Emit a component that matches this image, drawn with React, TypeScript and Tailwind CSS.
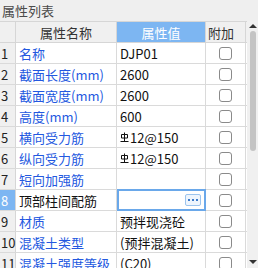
const rows = [
  { name: "名称", value: "DJP01" },
  { name: "截面长度(mm)", value: "2600" },
  { name: "截面宽度(mm)", value: "2600" },
  { name: "高度(mm)", value: "600" },
  { name: "横向受力筋", value: "12@150", bar: true },
  { name: "纵向受力筋", value: "12@150", bar: true },
  { name: "短向加强筋", value: "" },
  { name: "顶部柱间配筋", value: "", active: true },
  { name: "材质", value: "预拌现浇砼" },
  { name: "混凝土类型", value: "(预拌混凝土)" },
  { name: "混凝土强度等级", value: "(C20)" },
];

function RebarMark() {
  return (
    <svg width="9" height="11" viewBox="0 0 9 11" className="mr-[1px] shrink-0">
      <path d="M1.5 2.5 h6 v3.5 h-6 z" fill="none" stroke="#111" strokeWidth="1" />
      <path d="M4.5 0.5 v9" stroke="#111" strokeWidth="1" />
      <path d="M0.5 9.5 h8" stroke="#111" strokeWidth="1" />
    </svg>
  );
}

function Check() {
  return <div className="w-[13px] h-[13px] rounded-[3px] border border-[#8a8a8a] bg-white" />;
}

export default function App() {
  return (
    <div
      className="w-[258px] h-[268px] overflow-hidden bg-white flex flex-col text-[13px] leading-none"
      style={{ fontFamily: '"Noto Sans CJK SC", "Noto Sans", sans-serif' }}
    >
      {/* title */}
      <div className="h-[21px] shrink-0 bg-[#efefef] flex items-center pl-[2px] text-[#4a4a4a]">属性列表</div>

      <div className="flex flex-1 min-h-0">
        <div className="w-[247px] flex flex-col">
          {/* header */}
          <div className="flex h-[22px] shrink-0 bg-[#f0f0f0] border-t border-b border-[#d6d6d6]">
            <div className="w-[16px] border-r border-[#d6d6d6]" />
            <div className="w-[101px] border-r border-[#d6d6d6] flex items-center justify-center text-[#333]">属性名称</div>
            <div className="w-[89px] bg-[#7db6f2] border-r border-[#d6d6d6] flex items-center justify-center text-white">属性值</div>
            <div className="w-[40px] border-r border-[#d6d6d6] flex items-center pl-[2px] text-[#333]">附加</div>
          </div>

          {rows.map((r, i) => (
            <div key={i} className="flex h-[21px] shrink-0 border-b border-[#dadada]">
              <div
                className={
                  "w-[16px] border-r border-[#d6d6d6] flex items-center pl-[1px] " +
                  (r.active ? "bg-[#7db6f2] text-white" : "bg-[#f0f0f0] text-[#222]")
                }
              >
                {i + 1}
              </div>
              <div
                className={
                  "w-[101px] border-r border-[#dadada] flex items-center pl-[3px] whitespace-nowrap " +
                  (r.active ? "text-[#111]" : "text-[#2358e0]")
                }
              >
                {r.name}
              </div>
              {r.active ? (
                <div className="w-[89px] border-2 border-[#6aa8ea] flex items-center justify-end pr-[3px] -mt-[1px] h-[22px]">
                  <div className="w-[16px] h-[12px] rounded-[2px] border border-[#9cc4ee] bg-[#eef5fd] flex items-center justify-center gap-[2px]">
                    <div className="w-[2px] h-[2px] bg-[#3b79c9]" />
                    <div className="w-[2px] h-[2px] bg-[#3b79c9]" />
                    <div className="w-[2px] h-[2px] bg-[#3b79c9]" />
                  </div>
                </div>
              ) : (
                <div className="w-[89px] border-r border-[#dadada] flex items-center pl-[3px] text-[#111] whitespace-nowrap overflow-hidden">
                  {r.bar && <RebarMark />}
                  {r.value}
                </div>
              )}
              <div className="w-[40px] border-r border-[#dadada] flex items-center justify-center pr-[1px]">
                <Check />
              </div>
            </div>
          ))}
        </div>

        {/* scrollbar */}
        <div className="w-[11px] bg-[#f0f0f0] flex flex-col items-center">
          <div className="mt-[3px] w-0 h-0 border-l-[4px] border-r-[4px] border-b-[4px] border-l-transparent border-r-transparent border-b-[#333]" />
          <div className="mt-[3px] w-[6px] h-[120px] rounded-[3px] bg-[#c4c4c4]" />
          <div className="mt-auto mb-[4px] w-0 h-0 border-l-[4px] border-r-[4px] border-t-[4px] border-l-transparent border-r-transparent border-t-[#333]" />
        </div>
      </div>
    </div>
  );
}
